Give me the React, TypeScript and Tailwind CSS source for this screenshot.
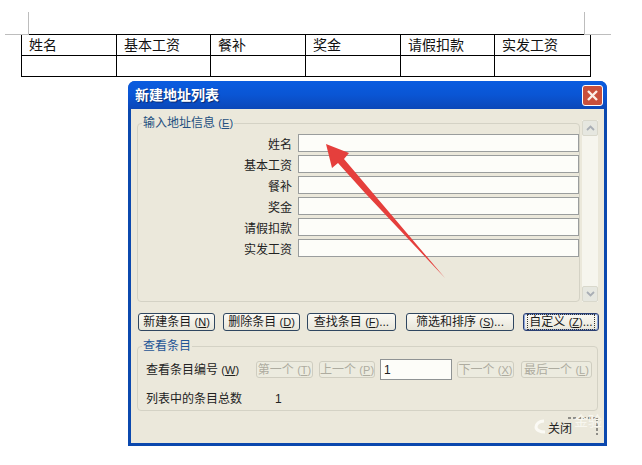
import React from 'react';

const FONT = "font-['Liberation_Sans','Noto_Sans_CJK_SC',sans-serif]";

const columns = ['姓名', '基本工资', '餐补', '奖金', '请假扣款', '实发工资'];

const Mnemonic = ({ text, letter, tail }: { text: string; letter: string; tail?: string }) => (
  <>
    {text} <span className="text-[11px]">(<span className="underline">{letter}</span>)</span>
    {tail}
  </>
);

const ActionButton = ({ className, children, focused }: { className: string; children: React.ReactNode; focused?: boolean }) => (
  <button
    className={`${className} h-[18px] shrink-0 rounded-[3px] border bg-linear-to-b from-[#fbfaf5] to-[#e8e6da] text-[12px] leading-none text-[#1a1a1a] whitespace-nowrap ${
      focused ? 'border-[#2a3f73] ring-1 ring-inset ring-[#8ea8dc]' : 'border-[#2f4660]'
    }`}
  >
    {focused ? <span className="border border-dotted border-[#333] px-[1px]">{children}</span> : children}
  </button>
);

const DisabledButton = ({ className, children }: { className: string; children: React.ReactNode }) => (
  <button className={`${className} h-[17px] shrink-0 rounded-[3px] border border-[#cfcdc0] bg-[#ecebdf] text-[12px] leading-none text-[#aeaca0] whitespace-nowrap`}>
    {children}
  </button>
);

const ScrollArrow = ({ down }: { down?: boolean }) => (
  <div className="flex h-[16px] w-[16px] items-center justify-center rounded-[2px] border border-[#d9d8cc] bg-[#e6e7e0]">
    <svg width="9" height="6" viewBox="0 0 9 6" fill="none">
      <path d={down ? 'M1 1l3.500 3.500L8 1' : 'M1 5l3.500-3.500L8 5'} stroke="#a9aeb5" strokeWidth="1.800" />
    </svg>
  </div>
);

export default function App() {
  return (
    <div className={`relative h-[465px] w-[642px] overflow-hidden bg-white ${FONT}`}>
      {/* page corner marks */}
      <div className="ml-[5px] flex h-[23px] w-[606px] justify-between pt-[12px] box-content">
        <div className="h-[23px] w-[24px] border-r border-b border-[#bdbdbd]" />
        <div className="h-[23px] w-[27px] border-l border-b border-[#bdbdbd]" />
      </div>

      <table className="ml-[21px] w-[570px] table-fixed border-collapse -mt-[1px]">
        <colgroup>
          <col className="w-[95px]" />
          <col className="w-[94px]" />
          <col className="w-[95px]" />
          <col className="w-[95px]" />
          <col className="w-[94px]" />
          <col className="w-[96px]" />
        </colgroup>
        <tbody>
          <tr className="h-[21px]">
            {columns.map((c) => (
              <td key={c} className="border border-black pl-[7px] text-[14px] leading-none text-[#111]">
                {c}
              </td>
            ))}
          </tr>
          <tr className="h-[21px]">
            {columns.map((c) => (
              <td key={c} className="border border-black" />
            ))}
          </tr>
        </tbody>
      </table>

      {/* dialog */}
      <div className="ml-[128px] mt-[4px] flex h-[365px] w-[479px] flex-col rounded-t-[7px] bg-[#0b48ae]">
        <div className="flex h-[28px] shrink-0 items-center justify-between rounded-t-[7px] bg-linear-to-b from-[#0a5ce0] via-[#0a55d4] to-[#0b47b8] pl-[7px] pr-[4px]">
          <span className="text-[14px] font-bold text-white [text-shadow:1px_1px_1px_#0a2a70]">新建地址列表</span>
          <button className="flex h-[21px] w-[21px] items-center justify-center rounded-[3px] border border-white bg-[#c9503c]">
            <svg width="13" height="13" viewBox="0 0 13 13">
              <path d="M2 2l9 9M11 2l-9 9" stroke="#fbeee6" strokeWidth="2.400" />
            </svg>
          </button>
        </div>

        <div className="mx-[3px] mb-[3px] flex-1 bg-[#ebe8db] px-[6px] pt-[6px]">
          <div className="flex items-start gap-[2px]">
            <fieldset className="h-[187px] w-[445px] rounded-[4px] border border-[#d4d2c5]">
              <legend className="ml-[4px] px-[1px] text-[12px] leading-[16px] text-[#24507f]">
                <Mnemonic text="输入地址信息" letter="E" />
              </legend>
              <div className="flex flex-col gap-[3px] pt-[3px]">
                {columns.map((c) => (
                  <div key={c} className="flex h-[18px] items-center">
                    <span className="w-[154px] pt-[3px] text-right text-[12px] leading-none text-[#222]">{c}</span>
                    <div className="ml-[6px] h-[18px] w-[281px] border border-[#9a9d9d] bg-[#fdfdf9]" />
                  </div>
                ))}
              </div>
            </fieldset>
            <div className="mt-[5px] flex h-[182px] w-[16px] flex-col justify-between bg-[#f6f5ee]">
              <ScrollArrow />
              <ScrollArrow down />
            </div>
          </div>

          <div className="mt-[11px] ml-[1px] flex">
            <ActionButton className="w-[77px]"><Mnemonic text="新建条目" letter="N" /></ActionButton>
            <ActionButton className="ml-[8px] w-[77px]"><Mnemonic text="删除条目" letter="D" /></ActionButton>
            <ActionButton className="ml-[7px] w-[89px]"><Mnemonic text="查找条目" letter="F" tail="..." /></ActionButton>
            <ActionButton className="ml-[10px] w-[108px]"><Mnemonic text="筛选和排序" letter="S" tail="..." /></ActionButton>
            <ActionButton className="ml-[9px] w-[76px]" focused><Mnemonic text="自定义" letter="Z" tail="..." /></ActionButton>
          </div>

          <fieldset className="mt-[7px] h-[73px] w-[461px] rounded-[4px] border border-[#d4d2c5]">
            <legend className="ml-[4px] px-[1px] text-[12px] leading-[16px] text-[#1f5596]">查看条目</legend>
            <div className="flex items-center pt-[5px] pl-[8px]">
              <span className="w-[110px] text-[12px] leading-none text-[#222]">
                <Mnemonic text="查看条目编号" letter="W" />
              </span>
              <DisabledButton className="w-[57px]"><Mnemonic text="第一个" letter="T" /></DisabledButton>
              <DisabledButton className="ml-[6px] w-[56px]"><Mnemonic text="上一个" letter="P" /></DisabledButton>
              <div className="ml-[5px] flex h-[21px] w-[72px] items-center border border-[#8f9394] bg-[#fdfdf9] pl-[3px] text-[12px] text-[#222]">1</div>
              <DisabledButton className="ml-[5px] w-[57px]"><Mnemonic text="下一个" letter="X" /></DisabledButton>
              <DisabledButton className="ml-[7px] w-[71px]"><Mnemonic text="最后一个" letter="L" /></DisabledButton>
            </div>
            <div className="mt-[13px] flex items-center pl-[8px] text-[12px] leading-none text-[#222]">
              <span className="w-[129px]">列表中的条目总数</span>
              <span>1</span>
            </div>
          </fieldset>

          <div className="mt-[12px] flex justify-end pr-[26px] text-[12px] leading-none text-[#222]">关闭</div>
        </div>
      </div>

      {/* annotation arrow and watermark remains drawn over the dialog */}
      <svg className="absolute left-0 top-0" width="642" height="465" viewBox="0 0 642 465">
        <polygon points="326,144 349,153 344,159 372,192 445,278 365,193 338,163 332,168" fill="#e53f3c" />
        <path d="M544 421c-5 0-8 3-8 6s4 5 9 5" fill="none" stroke="#fbfaf5" strokeWidth="3" />
        <path d="M568 418h30M597 418v17" fill="none" stroke="#333" strokeWidth="1" strokeDasharray="3 2" />
      </svg>
      <div className="absolute left-[574px] top-[414px] text-[14px] leading-none text-[#f8f7f0]">金验</div>
    </div>
  );
}
